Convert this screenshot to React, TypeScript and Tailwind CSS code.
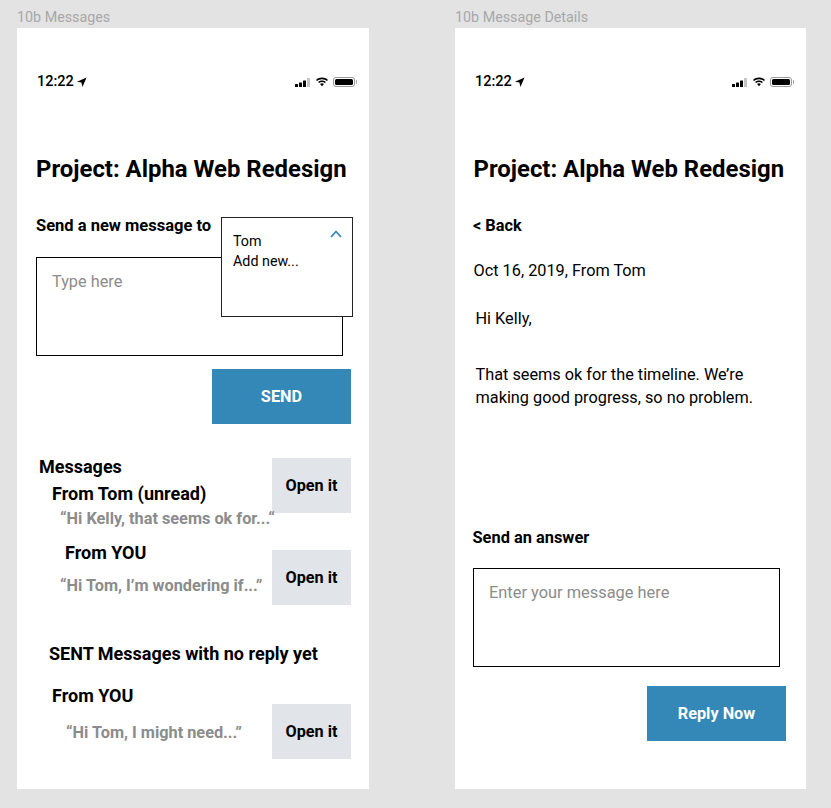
const font = { fontFamily: "Roboto, sans-serif" };

function StatusBar() {
  return (
    <div className="flex h-[16px] items-center justify-between pl-[20px] pr-[12px]">
      <div className="flex items-center gap-[3px]">
        <span className="text-[14.5px] font-medium leading-[16px] text-black">12:22</span>
        <svg width="10" height="10" viewBox="0 0 9 9">
          <path d="M8.6.4 0 4.200l4 .8.9 4z" fill="#000" />
        </svg>
      </div>
      <div className="flex items-center gap-[4px]">
        <svg width="16" height="9" viewBox="0 0 16 9">
          <rect x="0" y="6" width="3" height="3" rx=".5" fill="#000" />
          <rect x="4" y="4.500" width="3" height="4.500" rx=".5" fill="#000" />
          <rect x="8" y="2.500" width="3" height="6.500" rx=".5" fill="#000" />
          <rect x="12" y="0" width="3" height="9" rx=".5" fill="#c4c4c4" />
        </svg>
        <svg width="14" height="10" viewBox="0 0 14 10">
          <path d="M7 2.200c1.900 0 3.600.7 4.900 1.900L13 2.900C11.400 1.400 9.300.6 7 .6S2.600 1.400 1 2.900l1.100 1.200C3.400 2.900 5.100 2.200 7 2.200z" fill="#000" />
          <path d="M7 5c1.100 0 2.100.4 2.900 1.100l1-1.100C9.800 4 8.500 3.500 7 3.500S4.200 4 3.100 5l1 1.100C4.900 5.400 5.900 5 7 5z" fill="#000" />
          <path d="M7 6.300c-.8 0-1.400.3-1.900.7L7 9.200 8.900 7c-.5-.4-1.100-.7-1.900-.7z" fill="#000" />
        </svg>
        <div className="flex items-center gap-[1px]">
          <div className="h-[10px] w-[22px] rounded-[3px] border border-[#999] bg-white p-[1px]">
            <div className="h-full w-full rounded-[1.5px] bg-black" />
          </div>
          <div className="h-[4px] w-[1px] bg-[#aaa]" />
        </div>
      </div>
    </div>
  );
}

function OpenButton() {
  return (
    <button className="flex h-[55px] w-[79px] shrink-0 items-center justify-center bg-[#e1e4e8] pt-[2px] text-[16.2px] font-bold text-black">
      Open it
    </button>
  );
}

function Quote({ text, className }: { text: string; className: string }) {
  return <p className={`text-[16.3px] font-bold leading-[20px] whitespace-nowrap text-[#8c8c8c] ${className}`}>{text}</p>;
}

function Messages() {
  return (
    <div className="relative h-[761px] w-[352px] bg-white">
      <div className="pt-[46px]">
        <StatusBar />
      </div>
      <h1 className="mt-[63px] pl-[19px] text-[23.9px] font-bold leading-[32px] whitespace-nowrap text-black">Project: Alpha Web Redesign</h1>
      <p className="mt-[31px] pl-[19px] text-[16.5px] font-bold leading-[20px] text-black">Send a new message to</p>

      <div className="ml-[19px] mt-[21px] h-[99px] w-[307px] border border-black pl-[15px] pt-[12px] text-[16.3px] leading-[24px] text-[#8c8c8c]">
        Type here
      </div>

      {/* menu ouvert par dessus le champ */}
      <div className="absolute left-[204px] top-[189px] h-[100px] w-[132px] border border-[#222] bg-white pl-[11px] pt-[13px] text-[14.3px] leading-[20px] text-black">
        <p>Tom</p>
        <p>Add new...</p>
        <svg className="absolute right-[10px] top-[12px]" width="12" height="8" viewBox="0 0 12 8" fill="none">
          <path d="M1 7l5-5.500L11 7" stroke="#3388b8" strokeWidth="1.800" />
        </svg>
      </div>

      <div className="mt-[13px] flex justify-end pr-[18px]">
        <button className="flex h-[55px] w-[139px] items-center justify-center bg-[#3388b8] pt-[2px] text-[16.3px] font-bold text-white">SEND</button>
      </div>

      <div className="mt-[34px] flex items-start justify-between pr-[18px]">
        <div className="-mt-[1px] pl-[22px]">
          <p className="text-[18px] font-bold leading-[20px] text-black">Messages</p>
          <p className="ml-[13px] mt-[7px] text-[18px] font-bold leading-[20px] whitespace-nowrap text-black">From Tom (unread)</p>
        </div>
        <OpenButton />
      </div>
      <Quote text="“Hi Kelly, that seems ok for...“" className="pl-[43px] -mt-[4px]" />

      <div className="mt-[21px] flex items-start justify-between pr-[18px]">
        <div className="pl-[43px]">
          <p className="ml-[5px] mt-[-7px] text-[18px] font-bold leading-[20px] text-black">From YOU</p>
          <Quote text="“Hi Tom, I’m wondering if...”" className="mt-[13px]" />
        </div>
        <OpenButton />
      </div>

      <p className="mt-[38px] pl-[32px] text-[18px] font-bold leading-[22px] text-black">SENT Messages with no reply yet</p>

      <p className="mt-[20px] pl-[35px] text-[18px] font-bold leading-[22px] text-black">From YOU</p>
      <div className="mt-[-3px] flex items-center justify-between pr-[18px]">
        <Quote text="“Hi Tom, I might need...”" className="mt-[2px] pl-[49px]" />
        <OpenButton />
      </div>
    </div>
  );
}

function Details() {
  return (
    <div className="h-[761px] w-[351px] bg-white">
      <div className="pt-[46px]">
        <StatusBar />
      </div>
      <h1 className="mt-[63px] pl-[18.5px] text-[23.9px] font-bold leading-[32px] whitespace-nowrap text-black">Project: Alpha Web Redesign</h1>
      <p className="mt-[31px] pl-[18px] text-[16.3px] font-bold leading-[20px] text-black">&lt; Back</p>
      <p className="mt-[25px] pl-[18.5px] text-[16.3px] leading-[20px] text-black">Oct 16, 2019, From Tom</p>
      <p className="mt-[28px] pl-[20.5px] text-[16.3px] leading-[20px] text-black">Hi Kelly,</p>
      <p className="mt-[34px] pl-[20.5px] text-[16.3px] leading-[23px] text-black">
        That seems ok for the timeline. We’re
        <br />
        making good progress, so no problem.
      </p>
      <p className="mt-[119px] pl-[17.5px] text-[16.4px] font-bold leading-[20px] text-black">Send an answer</p>
      <div className="ml-[18px] mt-[20px] h-[99px] w-[307px] border border-black pl-[15px] pt-[12px] text-[16.4px] leading-[24px] text-[#8c8c8c]">
        Enter your message here
      </div>
      <div className="mt-[19px] flex justify-end pr-[20px]">
        <button className="flex h-[55px] w-[139px] items-center justify-center bg-[#3388b8] pt-[2px] text-[16.3px] font-bold text-white">Reply Now</button>
      </div>
    </div>
  );
}

export default function App() {
  return (
    <div className="flex h-[808px] w-[831px] gap-[86px] overflow-hidden bg-[#e3e3e3] pl-[17px] pt-[10px]" style={font}>
      <div className="w-[352px]">
        <p className="h-[18px] text-[14.3px] leading-[15px] whitespace-nowrap text-[#a8a8a8]">10b Messages</p>
        <Messages />
      </div>
      <div className="w-[351px]">
        <p className="h-[18px] text-[14.3px] leading-[15px] whitespace-nowrap text-[#a8a8a8]">10b Message Details</p>
        <Details />
      </div>
    </div>
  );
}
